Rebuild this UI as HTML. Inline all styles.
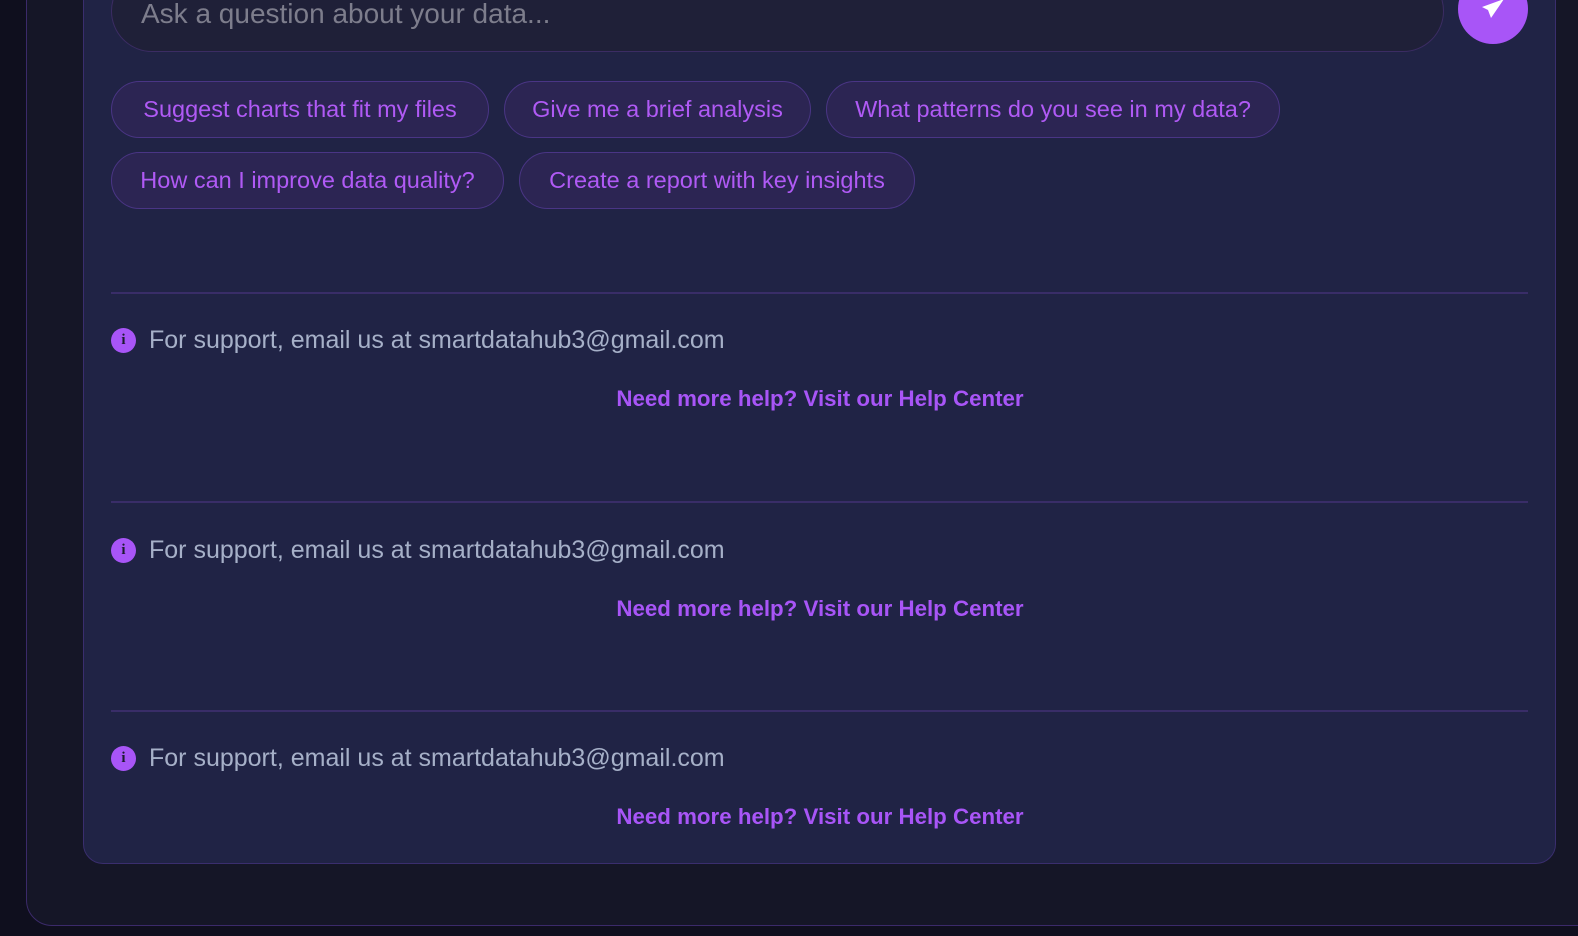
<!DOCTYPE html>
<html><head><style>
*{margin:0;padding:0;box-sizing:border-box}
body{width:1578px;height:936px;background:#0f0f1e;overflow:hidden;position:relative;font-family:"Liberation Sans",sans-serif}
.outer{position:absolute;left:26px;top:-40px;width:1600px;height:966px;background:#151627;border:1px solid #3b2a6a;border-radius:26px}
.card{position:absolute;left:83px;top:-40px;width:1473px;height:904px;background:#202345;border:1px solid #3a2e6e;border-radius:20px}
.input{position:absolute;left:111px;top:-30px;width:1333px;height:82px;background:#1f2038;border:1px solid #3b2c63;border-radius:41px;color:#7d7d8c;font-size:28px;padding:27px 0 0 29px}
.send{position:absolute;left:1458px;top:-26px;width:70px;height:70px;border-radius:50%;background:#a855f7}
.chip{position:absolute;height:57px;border:1px solid #4a3585;background:#2c2553;border-radius:29px;color:#b05af5;font-size:23.5px;line-height:55px;text-align:center;white-space:nowrap}
.hr{position:absolute;left:111px;width:1417px;height:2px;background:#392d68}
.sup{position:absolute;left:111px;color:#a6b0c8;font-size:25px;display:flex;align-items:center}
.ic{width:25px;height:25px;border-radius:50%;background:#a855f7;color:#1b1b30;font-size:15px;font-weight:bold;text-align:center;line-height:25px;margin-right:13px;font-family:"Liberation Serif",serif}
.help{position:absolute;left:0;width:1640px;text-align:center;color:#a855f7;font-size:22.3px;font-weight:bold}
</style></head><body>
<div class="outer"></div>
<div class="card"></div>
<div class="input">Ask a question about your data...</div>
<div class="send"><svg width="70" height="70" viewBox="0 0 70 70"><path d="M46 25 L24 33 L30 36 L33 44 Z" fill="#fff"/></svg></div>
<div class="chip" style="left:111px;top:81px;width:378px">Suggest charts that fit my files</div>
<div class="chip" style="left:504px;top:81px;width:307px">Give me a brief analysis</div>
<div class="chip" style="left:826px;top:81px;width:454px">What patterns do you see in my data?</div>
<div class="chip" style="left:111px;top:152px;width:393px">How can I improve data quality?</div>
<div class="chip" style="left:519px;top:152px;width:396px">Create a report with key insights</div>
<div class="hr" style="top:292px"></div>
<div class="sup" style="top:326px"><div class="ic">i</div>For support, email us at smartdatahub3@gmail.com</div>
<div class="help" style="top:386px">Need more help? Visit our Help Center</div>
<div class="hr" style="top:501px"></div>
<div class="sup" style="top:536px"><div class="ic">i</div>For support, email us at smartdatahub3@gmail.com</div>
<div class="help" style="top:596px">Need more help? Visit our Help Center</div>
<div class="hr" style="top:710px"></div>
<div class="sup" style="top:744px"><div class="ic">i</div>For support, email us at smartdatahub3@gmail.com</div>
<div class="help" style="top:804px">Need more help? Visit our Help Center</div>
</body></html>
